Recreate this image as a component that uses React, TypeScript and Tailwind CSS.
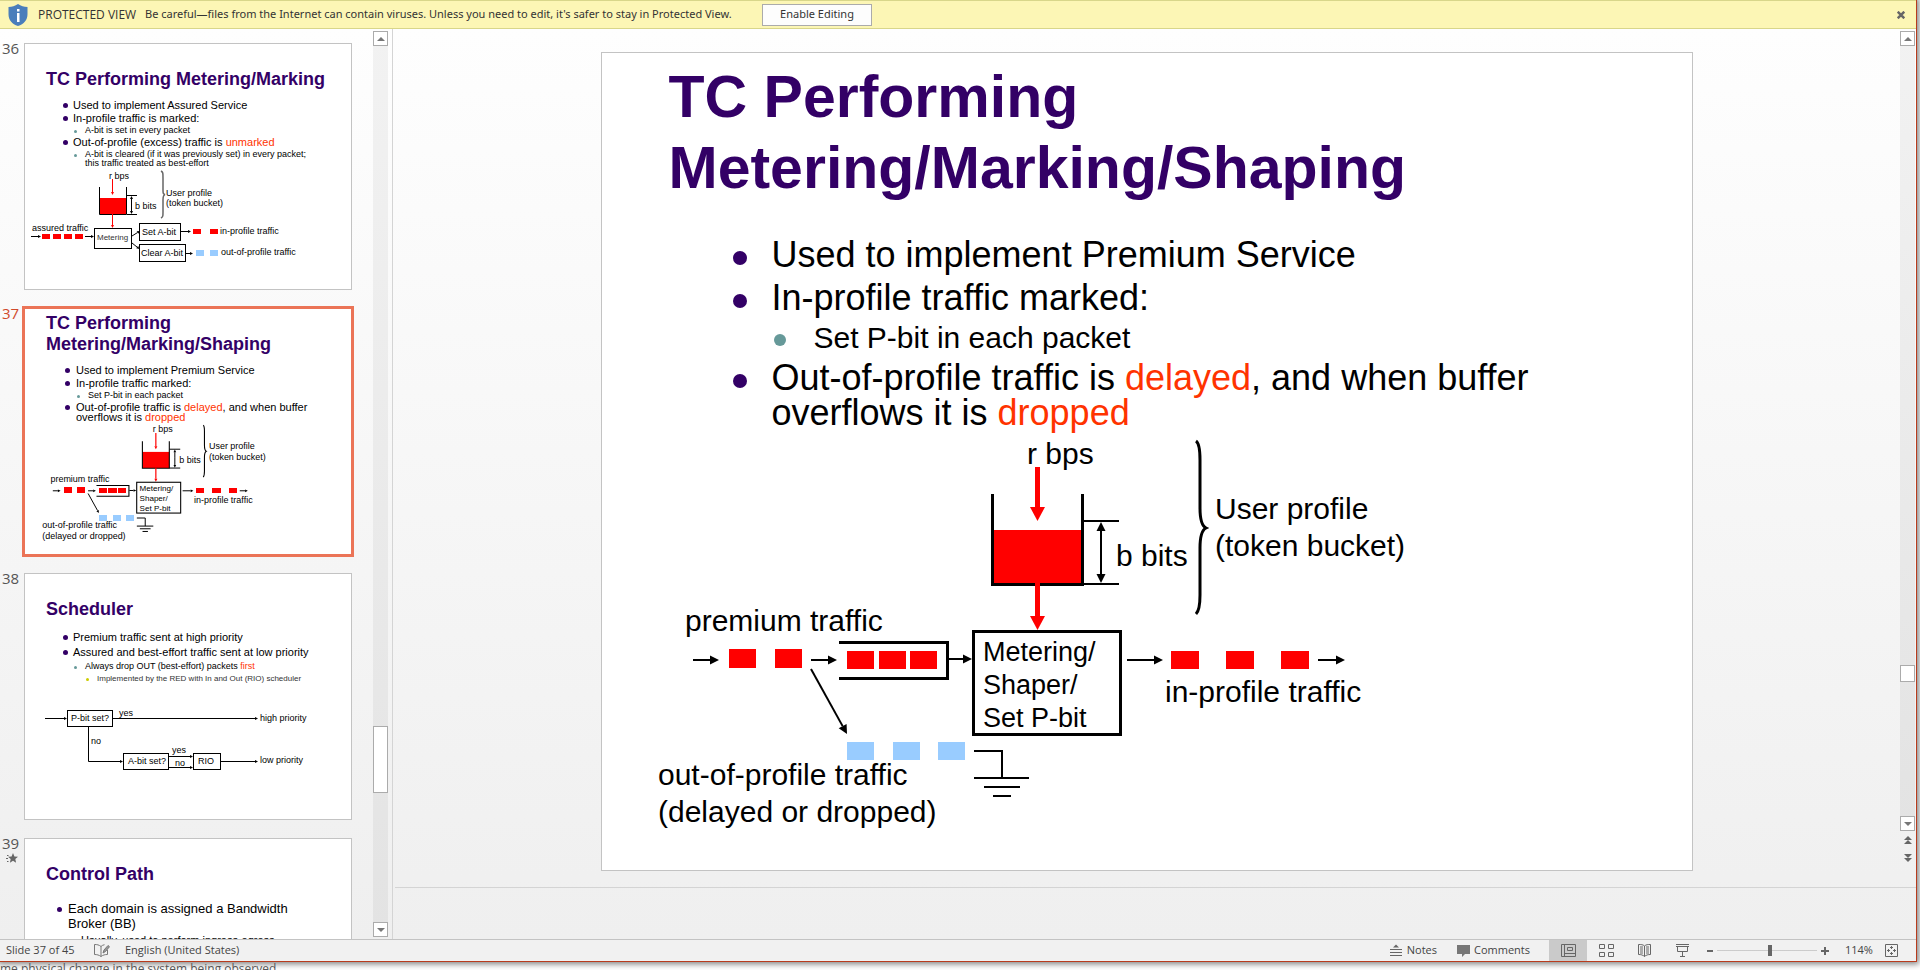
import type { ReactNode } from "react";

type Level = { row: string; dot: string };

const mainLevels: Level[] = [
  { row: "ml-[131px] gap-[25px] text-[36px] leading-[35px]", dot: "mt-[14px] size-[14px] bg-[#330066]" },
  { row: "ml-[172px] gap-7 text-[30px] leading-[29px]", dot: "mt-[11px] size-[12px] bg-[#669999]" },
];

const thumbLevels: Level[] = [
  { row: "ml-[38px] gap-[5px] text-[11px] leading-[11px]", dot: "mt-[3px] size-[5px] bg-[#330066]" },
  { row: "ml-[49px] gap-2 text-[9px] leading-[9px]", dot: "mt-[4px] size-[3px] bg-[#669999]" },
  { row: "ml-[61px] gap-2 text-[8px] leading-[8px] text-[#333]", dot: "mt-[3px] size-[3px] bg-[#cccc00]" },
];

const thumbLevelsCompact: Level[] = [
  { row: "ml-10 gap-[6px] text-[11px] leading-[10px]", dot: "mt-[3px] size-[5px] bg-[#330066]" },
  { row: "ml-[52px] gap-2 text-[9px] leading-[8px]", dot: "mt-[4px] size-[3px] bg-[#669999]" },
];

const thumbLevelsLarge: Level[] = [
  { row: "ml-8 gap-[6px] text-[13px] leading-[15px]", dot: "mt-[6px] size-[5px] bg-[#330066]" },
  { row: "ml-11 gap-2 text-[11px] leading-[13px]", dot: "mt-[5px] size-[4px] bg-[#669999]" },
];

function Bullet({ level, children }: { level: Level; children: ReactNode }) {
  return (
    <li className={`flex items-start whitespace-nowrap ${level.row}`}>
      <span className={`shrink-0 rounded-full ${level.dot}`} />
      <span>{children}</span>
    </li>
  );
}

function Red({ children }: { children: ReactNode }) {
  return <span className="text-[#ff3300]">{children}</span>;
}

type ArrowProps = {
  x1: number;
  y1: number;
  x2: number;
  y2: number;
  w?: number;
  len?: number;
  half?: number;
  color?: string;
};

function Arrow({ x1, y1, x2, y2, w = 2, len = 9, half = 4.5, color = "#000" }: ArrowProps) {
  const d = Math.hypot(x2 - x1, y2 - y1);
  const ux = (x2 - x1) / d;
  const uy = (y2 - y1) / d;
  const bx = x2 - ux * len;
  const by = y2 - uy * len;
  return (
    <g>
      <line x1={x1} y1={y1} x2={bx} y2={by} stroke={color} strokeWidth={w} />
      <polygon
        fill={color}
        points={`${x2},${y2} ${bx - uy * half},${by + ux * half} ${bx + uy * half},${by - ux * half}`}
      />
    </g>
  );
}

function Packets({ xs, y, w, h, color = "#ff0000" }: { xs: number[]; y: number; w: number; h: number; color?: string }) {
  return (
    <g fill={color} shapeRendering="crispEdges">
      {xs.map((x) => (
        <rect key={x} x={x} y={y} width={w} height={h} />
      ))}
    </g>
  );
}

function ShapingDiagram({ small = false }: { small?: boolean }) {
  const thin = small ? 3.3 : 2;
  const thick = small ? 3.6 : 3;
  const black = { w: thin };
  const red = small ? { w: 4, len: 10, half: 5, color: "#ff0000" } : { w: 5, len: 14, half: 7.5, color: "#ff0000" };
  return (
    <svg
      viewBox={small ? "600 430 1090 440" : "602 430 1090 440"}
      className="block w-full"
      fontFamily="'Liberation Sans', Arial, sans-serif"
      fontSize="30"
    >
      <text x="1027" y="464">r bps</text>
      <rect x="994" y="530" width="88" height="54" fill="#ff0000" />
      <path d="M992.5 494V584.5H1082.5V494" fill="none" stroke="#000" strokeWidth={thick} />
      <path d="M1083 521H1119M1083 584H1119" stroke="#000" strokeWidth={thin} />
      <Arrow x1={1101} y1={550} x2={1101} y2={522} {...black} />
      <Arrow x1={1101} y1={550} x2={1101} y2={583} {...black} />
      <Arrow x1={1037.5} y1={467} x2={1037.5} y2={521} {...red} />
      <Arrow x1={1037.5} y1={583} x2={1037.5} y2={630} {...red} />
      <text x="1116" y="566">b bits</text>
      <path
        d="M1196 441C1199 443 1200 449 1200 460V508C1200 520 1202 526 1206 528C1202 530 1200 536 1200 548V595C1200 606 1199 611 1196 614"
        fill="none"
        stroke="#000"
        strokeWidth={thick}
      />
      <text x="1215" y="519">User profile</text>
      <text x="1215" y="556">(token bucket)</text>
      <text x="685" y="631">premium traffic</text>
      <Arrow x1={693} y1={660} x2={719} y2={660} {...black} />
      <Packets xs={[729, 775]} y={649} w={27} h={19} />
      <Arrow x1={811} y1={660} x2={837} y2={660} {...black} />
      <Arrow x1={811} y1={669} x2={847} y2={734} {...black} />
      <path d="M839 642.5H947.5V678.5H839" fill="none" stroke="#000" strokeWidth={thick} />
      <Packets xs={[847, 879, 910]} y={651} w={27} h={18} />
      <Arrow x1={949} y1={659} x2={972} y2={659} {...black} />
      <rect x="973.5" y="631.5" width="147" height="103" fill="none" stroke="#000" strokeWidth={thick} />
      <g fontSize="27">
        <text x="983" y="661">Metering/</text>
        <text x="983" y="694">Shaper/</text>
        <text x="983" y="727">Set P-bit</text>
      </g>
      <Arrow x1={1127} y1={660} x2={1163} y2={660} {...black} />
      <Packets xs={[1171, 1226, 1281]} y={651} w={28} h={18} />
      <Arrow x1={1318} y1={660} x2={1345} y2={660} {...black} />
      <text x="1165" y="702">in-profile traffic</text>
      <Packets xs={[847, 893, 938]} y={742} w={27} h={18} color="#99ccff" />
      <path d="M974 751H1002V778M974 778H1029M984 787H1020M993 796H1011" fill="none" stroke="#000" strokeWidth={thin} />
      <text x="658" y="785">out-of-profile traffic</text>
      <text x="658" y="822">(delayed or dropped)</text>
    </svg>
  );
}

function MarkingDiagram() {
  const a = { w: 1, len: 3, half: 1.5 };
  return (
    <svg viewBox="25 168 326 120" className="block w-full" fontFamily="'Liberation Sans', Arial, sans-serif" fontSize="9">
      <text x="109" y="179">r bps</text>
      <rect x="100" y="198" width="26" height="16" fill="#ff0000" />
      <path d="M99.5 187V214.5H126.5V187M127 195.5H137M127 214.5H137" fill="none" stroke="#000" />
      <Arrow x1={131.5} y1={205} x2={131.5} y2={196} {...a} />
      <Arrow x1={131.5} y1={205} x2={131.5} y2={214} {...a} />
      <Arrow x1={112.5} y1={179} x2={112.5} y2={195} {...a} color="#ff0000" />
      <Arrow x1={112.5} y1={214} x2={112.5} y2={228} {...a} color="#ff0000" />
      <text x="135" y="209">b bits</text>
      <path
        d="M161 171C163 172 163 173 163 178V190C163 193 163 194 165 194.5C163 195 163 197 163 200V212C163 216 163 217 161 218"
        fill="none"
        stroke="#666"
        strokeWidth="1.5"
      />
      <text x="166" y="196">User profile</text>
      <text x="166" y="206">(token bucket)</text>
      <text x="32" y="231">assured traffic</text>
      <Arrow x1={31} y1={236.5} x2={41} y2={236.5} {...a} />
      <Packets xs={[42, 53, 64, 75]} y={234} w={8} h={5} />
      <Arrow x1={85} y1={236.5} x2={94} y2={236.5} {...a} />
      <g fill="none" stroke="#000">
        <rect x="94.5" y="228.5" width="37" height="20" />
        <rect x="139.5" y="223.5" width="41" height="17" />
        <rect x="139.5" y="244.5" width="46" height="17" />
      </g>
      <text x="97" y="240" fontSize="8" fill="#333">Metering</text>
      <Arrow x1={132} y1={236} x2={140} y2={231} {...a} />
      <Arrow x1={132} y1={243} x2={139.5} y2={249} {...a} />
      <text x="142" y="235">Set A-bit</text>
      <text x="141" y="256">Clear A-bit</text>
      <Arrow x1={181} y1={231.5} x2={191} y2={231.5} {...a} />
      <Packets xs={[193, 210]} y={229} w={8} h={5} />
      <text x="220" y="234">in-profile traffic</text>
      <Arrow x1={186} y1={253.5} x2={193} y2={253.5} {...a} />
      <Packets xs={[196, 210]} y={250} w={8} h={6} color="#99ccff" />
      <text x="221" y="255">out-of-profile traffic</text>
    </svg>
  );
}

function SchedulerDiagram() {
  const a = { w: 1, len: 3, half: 1.5 };
  return (
    <svg viewBox="25 686 326 132" className="block w-full" fontFamily="'Liberation Sans', Arial, sans-serif" fontSize="9">
      <Arrow x1={45} y1={718.5} x2={67} y2={718.5} {...a} />
      <g fill="none" stroke="#000">
        <rect x="67.5" y="710.5" width="45" height="16" />
        <rect x="123.5" y="753.5" width="45" height="16" />
        <rect x="193.5" y="753.5" width="27" height="16" />
        <path d="M88.5 727V761.5H120" />
      </g>
      <text x="71" y="721">P-bit set?</text>
      <text x="119" y="716">yes</text>
      <Arrow x1={113} y1={718.5} x2={258} y2={718.5} {...a} />
      <text x="260" y="721">high priority</text>
      <text x="91" y="744">no</text>
      <Arrow x1={119} y1={761.5} x2={123} y2={761.5} {...a} />
      <text x="128" y="764">A-bit set?</text>
      <text x="172" y="753">yes</text>
      <Arrow x1={169} y1={756.5} x2={193} y2={756.5} {...a} />
      <text x="175" y="766">no</text>
      <Arrow x1={169} y1={767.5} x2={193} y2={767.5} {...a} />
      <text x="198" y="764">RIO</text>
      <Arrow x1={221} y1={761.5} x2={258} y2={761.5} {...a} />
      <text x="260" y="763">low priority</text>
    </svg>
  );
}

type ThumbProps = { n: number; title: ReactNode; selected?: boolean; star?: boolean; children: ReactNode };

function Thumb({ n, title, selected, star, children }: ThumbProps) {
  return (
    <li className="flex items-start">
      <div
        className={`flex w-6 shrink-0 flex-col gap-1 pl-[2px] text-[15px] leading-[11px] ${
          selected ? "text-[#d04a2c]" : "text-[#555]"
        }`}
      >
        <span>{n}</span>
        {star && (
          <svg viewBox="0 0 12 10" className="ml-1 h-[10px] w-3" fill="#666">
            <path d="M7 0l1.4 3.4 3.6.3-2.7 2.3.8 3.7L7 7.7 3.9 9.7l.8-3.7L2 3.7l3.6-.3zM1 2h1.500v1H1zM0 5h2v1H0zM1 8h1.500v1H1z" />
          </svg>
        )}
      </div>
      <section
        className={`aspect-[328/247] w-[328px] overflow-hidden border bg-white pt-1 font-['Liberation_Sans',Arial,sans-serif] text-black ${
          selected ? "border-[#eb7457] ring-2 ring-[#eb7457]" : "border-[#c3c3c3]"
        }`}
      >
        <h2 className="flex h-[42px] items-end pl-[21px] text-[18px] leading-[21px] font-bold whitespace-nowrap text-[#330066]">
          <span>{title}</span>
        </h2>
        {children}
      </section>
    </li>
  );
}

function ScrollButton({ dir }: { dir: "up" | "down" }) {
  return (
    <button
      aria-label={`Scroll ${dir}`}
      className="flex size-[15px] shrink-0 items-center justify-center border border-[#ababab] bg-white"
    >
      <svg viewBox="0 0 8 4" className="h-1 w-2" fill="#777">
        {dir === "up" ? <path d="M4 0L8 4H0z" /> : <path d="M0 0H8L4 4z" />}
      </svg>
    </button>
  );
}

const track = "bg-linear-to-b from-[#f2f2f2] to-[#e3e3e3]";

function SlidePanel() {
  return (
    <aside className="flex w-[393px] shrink-0 border-r border-[#d4d4d4]">
      <ol className="flex min-h-0 w-[373px] flex-col gap-[18px] overflow-hidden pt-[14px]">
        <Thumb n={36} title="TC Performing Metering/Marking">
          <ul className="mt-[10px] flex flex-col gap-[2px]">
            <Bullet level={thumbLevels[0]}>Used to implement Assured Service</Bullet>
            <Bullet level={thumbLevels[0]}>In-profile traffic is marked:</Bullet>
            <Bullet level={thumbLevels[1]}>A-bit is set in every packet</Bullet>
            <Bullet level={thumbLevels[0]}>
              Out-of-profile (excess) traffic is <Red>unmarked</Red>
            </Bullet>
            <Bullet level={thumbLevels[1]}>
              A-bit is cleared (if it was previously set) in every packet;
              <br />
              this traffic treated as best-effort
            </Bullet>
          </ul>
          <MarkingDiagram />
        </Thumb>
        <Thumb
          n={37}
          selected
          title={
            <>
              TC Performing
              <br />
              Metering/Marking/Shaping
            </>
          }
        >
          <ul className="mt-[10px] flex flex-col gap-[3px]">
            <Bullet level={thumbLevelsCompact[0]}>Used to implement Premium Service</Bullet>
            <Bullet level={thumbLevelsCompact[0]}>In-profile traffic marked:</Bullet>
            <Bullet level={thumbLevelsCompact[1]}>Set P-bit in each packet</Bullet>
            <Bullet level={thumbLevelsCompact[0]}>
              Out-of-profile traffic is <Red>delayed</Red>, and when buffer
              <br />
              overflows it is <Red>dropped</Red>
            </Bullet>
          </ul>
          <ShapingDiagram small />
        </Thumb>
        <Thumb n={38} title="Scheduler">
          <ul className="mt-[12px] flex flex-col gap-[4px]">
            <Bullet level={thumbLevels[0]}>Premium traffic sent at high priority</Bullet>
            <Bullet level={thumbLevels[0]}>Assured and best-effort traffic sent at low priority</Bullet>
            <Bullet level={thumbLevels[1]}>
              Always drop OUT (best-effort) packets <Red>first</Red>
            </Bullet>
            <Bullet level={thumbLevels[2]}>Implemented by the RED with In and Out (RIO) scheduler</Bullet>
          </ul>
          <div className="pt-[3px]">
            <SchedulerDiagram />
          </div>
        </Thumb>
        <Thumb n={39} title="Control Path" star>
          <ul className="mt-4 flex flex-col gap-[3px]">
            <Bullet level={thumbLevelsLarge[0]}>
              Each domain is assigned a Bandwidth
              <br />
              Broker (BB)
            </Bullet>
            <Bullet level={thumbLevelsLarge[1]}>Usually, used to perform ingress-egress</Bullet>
          </ul>
        </Thumb>
      </ol>
      <div className={`my-[2px] flex w-[15px] flex-col ${track}`}>
        <ScrollButton dir="up" />
        <div className="flex-[680]" />
        <div className="h-[67px] border border-[#ababab] bg-white" />
        <div className="flex-[129]" />
        <ScrollButton dir="down" />
      </div>
    </aside>
  );
}

function Editor() {
  return (
    <main className="flex min-w-0 flex-1 flex-col">
      <div className="flex min-h-0 flex-1">
        <div className="min-w-0 flex-1 overflow-hidden pt-[23px]">
          <section className="mx-auto w-full max-w-[1092px] border border-[#c3c3c3] bg-white pt-[9px] font-['Liberation_Sans',Arial,sans-serif] text-black">
            <h1 className="pl-[67px] text-[59px] leading-[71px] font-bold text-[#330066]">
              TC Performing
              <br />
              Metering/Marking/Shaping
            </h1>
            <ul className="mt-[33px] flex flex-col gap-2">
              <Bullet level={mainLevels[0]}>Used to implement Premium Service</Bullet>
              <Bullet level={mainLevels[0]}>In-profile traffic marked:</Bullet>
              <Bullet level={mainLevels[1]}>Set P-bit in each packet</Bullet>
              <Bullet level={mainLevels[0]}>
                Out-of-profile traffic is <Red>delayed</Red>, and when buffer
                <br />
                overflows it is <Red>dropped</Red>
              </Bullet>
            </ul>
            <ShapingDiagram />
          </section>
        </div>
        <div className="mr-px flex w-[15px] flex-col pt-[2px] pb-[25px]">
          <div className={`flex flex-1 flex-col ${track}`}>
            <ScrollButton dir="up" />
            <div className="flex-[619]" />
            <div className="h-[17px] border border-[#ababab] bg-white" />
            <div className="flex-[134]" />
            <ScrollButton dir="down" />
          </div>
          <div className="flex flex-col items-center gap-[10px] pt-[5px]">
            <button aria-label="Previous slide">
              <svg viewBox="0 0 8 8" className="block size-2" fill="#666">
                <path d="M4 0L8 4H0zM4 4L8 8H0z" />
              </svg>
            </button>
            <button aria-label="Next slide">
              <svg viewBox="0 0 8 8" className="block size-2" fill="#666">
                <path d="M0 0H8L4 4zM0 4H8L4 8z" />
              </svg>
            </button>
          </div>
        </div>
      </div>
      <div className="ml-[2px] h-[52px] border-t border-[#d4d4d4]" />
    </main>
  );
}

function ProtectedBar() {
  return (
    <header className="flex h-[29px] shrink-0 items-center border-y border-[#d8d68a] bg-[#fcf6b5] pl-2 text-[11px] text-[#333]">
      <svg viewBox="0 0 20 22" className="mr-[10px] h-[22px] w-5">
        <path d="M10 0C13 2 16 3 19.500 3V10C19.500 16 16 20 10 22C4 20 .5 16 .5 10V3C4 3 7 2 10 0z" fill="#4a7ebb" />
        <rect x="9" y="9" width="2.500" height="9" fill="#fff" />
        <rect x="9" y="5" width="2.500" height="2.500" fill="#fff" />
      </svg>
      <span className="w-[97px] text-[12px] whitespace-nowrap">PROTECTED VIEW</span>
      <span className="ml-[10px] w-[597px] font-['Noto_Sans',sans-serif] whitespace-nowrap">
        Be careful—files from the Internet can contain viruses. Unless you need to edit, it's safer to stay in Protected View.
      </span>
      <button className="ml-[20px] h-[22px] w-[110px] border border-[#ababab] bg-[#fdfdfd] font-['Noto_Sans',sans-serif]">
        Enable Editing
      </button>
      <button aria-label="Close" className="mr-[11px] ml-auto">
        <svg viewBox="0 0 8 8" className="block size-2" stroke="#666" strokeWidth="2.5">
          <path d="M.7.7L7.300 7.300M7.300.7L.7 7.300" />
        </svg>
      </button>
    </header>
  );
}

function StatusBar() {
  return (
    <footer className="flex h-[22px] shrink-0 items-center border-t border-[#c3c3c3] bg-[#f1f1f1] text-[11px] text-[#444]">
      <span className="w-[94px] pl-[6px]">Slide 37 of 45</span>
      <button aria-label="Spelling">
        <svg viewBox="0 0 16 13" className="block h-[13px] w-4" fill="none" stroke="#777">
          <path d="M7 2.500C5 .8 3 .5.5.5V10.500C3 10.500 5 11 7 12.500V2.500C8 1.500 9 1 10.500.7M7 12.500C9 11 11 10.500 13.500 10.500V6" />
          <path d="M9 9l1-3L14 1.500l1.500 1.200L11.500 7.500z" fill="#999" />
        </svg>
      </button>
      <button className="ml-[15px]">English (United States)</button>
      <div className="ml-auto flex h-full items-center">
        <button className="flex items-center gap-[5px]">
          <svg viewBox="0 0 12 13" className="h-[13px] w-3" fill="none" stroke="#666">
            <path d="M0 5.500H12M0 8.500H12M0 11.500H12" />
            <path d="M3 3.500L6 .5 9 3.500z" fill="#666" stroke="none" />
          </svg>
          Notes
        </button>
        <button className="ml-5 flex items-center gap-1">
          <svg viewBox="0 0 13 12" className="h-3 w-[13px]" fill="#777">
            <path d="M0 0H13V9H8L5 12V9H0z" />
          </svg>
          Comments
        </button>
        <button aria-label="Normal" className="ml-[19px] flex h-full w-[38px] items-center justify-center bg-[#cacaca]">
          <svg viewBox="0 0 15 13" className="h-[13px] w-[15px]" fill="none" stroke="#666">
            <path d="M.5.500H14.500V12.500H.5zM3.500.5V12.500M3.500 9.500H14.500M6.500 3.500H11.500V6.500H6.500z" />
          </svg>
        </button>
        <button aria-label="Slide Sorter" className="flex w-[38px] justify-center">
          <svg viewBox="0 0 15 13" className="h-[13px] w-[15px]" fill="none" stroke="#666">
            <path d="M.5.500H5.500V4.500H.5zM9.500.500H14.500V4.500H9.500zM.5 8.500H5.500V12.500H.5zM9.500 8.500H14.500V12.500H9.500z" />
          </svg>
        </button>
        <button aria-label="Reading View" className="flex w-[38px] justify-center">
          <svg viewBox="0 0 13 13" className="size-[13px]" fill="none" stroke="#666">
            <path d="M6.500 2C5 .5 3 .5.5.5V10.500C3 10.500 5 11 6.500 12.500C8 11 10 10.500 12.500 10.500V.5C10 .5 8 .5 6.500 2zM6.500 2V12.500M2 3H5M2 5H5M2 7H5M2 9H5M8 3H11M8 5H11M8 7H11M8 9H11" />
          </svg>
        </button>
        <button aria-label="Slide Show" className="flex w-[38px] justify-center">
          <svg viewBox="0 0 13 13" className="size-[13px]" fill="none" stroke="#666">
            <path d="M0 .5H13M0 2.500H13M1.500 2.500V7.500H11.500V2.500M6.500 7.500V12M4 12.500H9" />
          </svg>
        </button>
        <button aria-label="Zoom out" className="ml-[6px] h-[2px] w-[6px] bg-[#666]" />
        <input
          type="range"
          aria-label="Zoom"
          min={0}
          max={100}
          defaultValue={53}
          className="mx-1 h-[12px] w-[100px] appearance-none bg-linear-to-b from-transparent from-[5px] via-[#a6a6a6] via-[5px] to-transparent to-[6px] [&::-webkit-slider-thumb]:h-[11px] [&::-webkit-slider-thumb]:w-[4px] [&::-webkit-slider-thumb]:appearance-none [&::-webkit-slider-thumb]:bg-[#666]"
        />
        <button aria-label="Zoom in">
          <svg viewBox="0 0 8 8" className="block size-2" stroke="#666" strokeWidth="2">
            <path d="M4 0V8M0 4H8" />
          </svg>
        </button>
        <button className="w-[56px] pl-4 text-left">114%</button>
        <button aria-label="Fit slide to window" className="mr-[18px]">
          <svg viewBox="0 0 13 13" className="block size-[13px]" fill="none" stroke="#666">
            <path d="M.5.500H12.500V12.500H.5zM6.500 2V5M6.500 8V11M2 6.500H5M8 6.500H11M5 3.500H8M5 9.500H8M3.500 5V8M9.500 5V8" />
          </svg>
        </button>
      </div>
    </footer>
  );
}

export default function App() {
  return (
    <div className="flex h-screen flex-col overflow-hidden bg-white font-['Open_Sans','Noto_Sans',sans-serif]">
      <div className="mr-[3px] flex min-h-0 flex-1 flex-col border-r border-b border-[#b83b1d] shadow-[0_0_6px_2px_rgba(0,0,0,0.5)]">
        <ProtectedBar />
        <div className="flex min-h-0 flex-1 bg-linear-to-b from-[#fefefe] to-[#efefef]">
          <SlidePanel />
          <Editor />
        </div>
        <StatusBar />
      </div>
      <p className="h-2 shrink-0 overflow-hidden text-[12px] leading-[13px] whitespace-nowrap text-[#555]">
        me physical change in the system being observed
      </p>
    </div>
  );
}
